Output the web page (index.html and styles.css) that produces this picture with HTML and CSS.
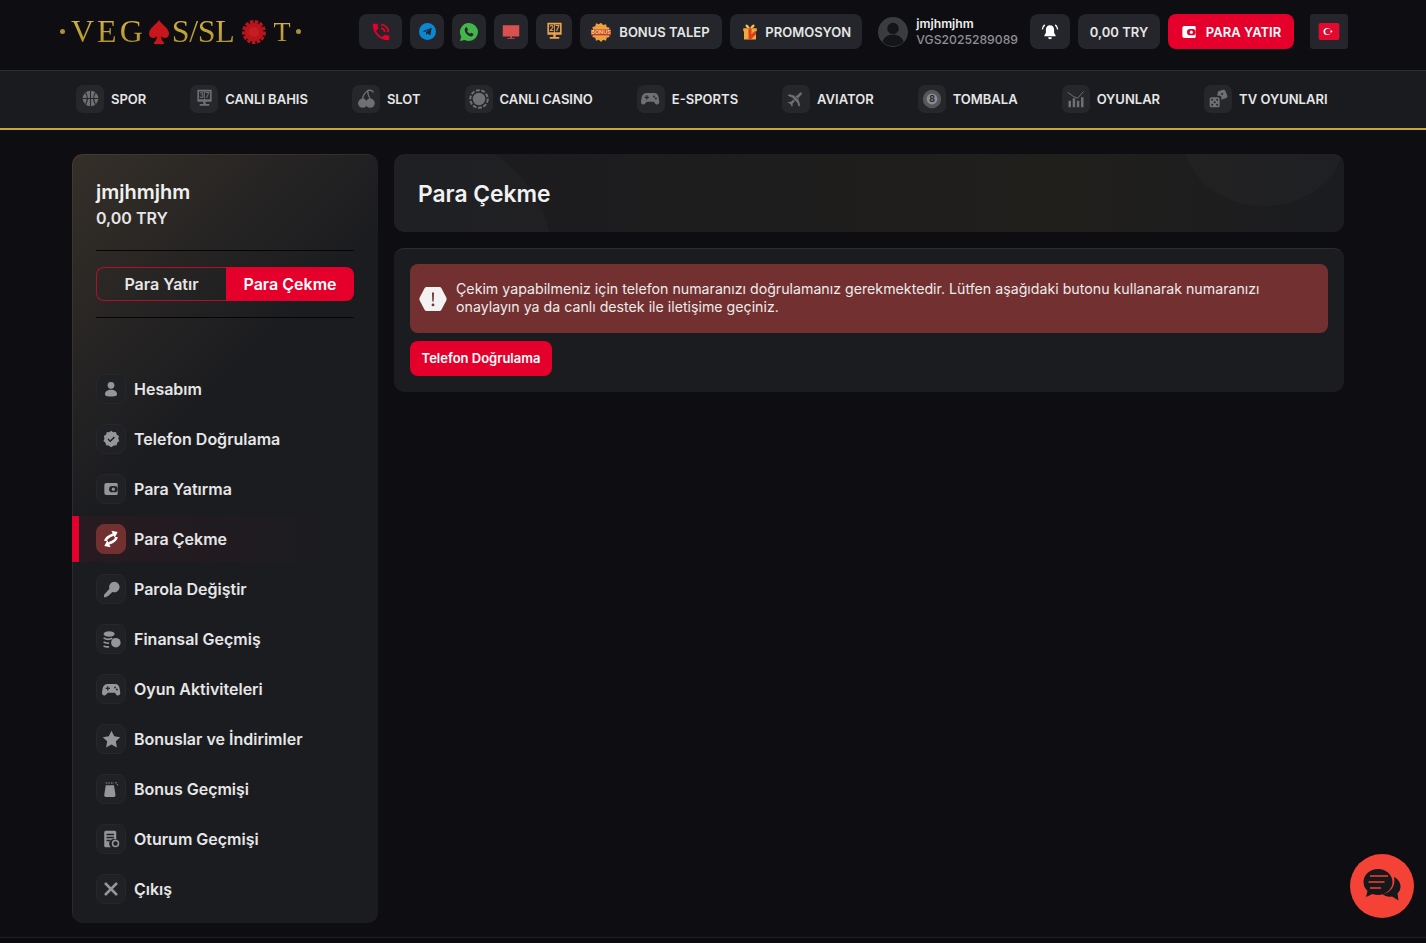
FILE: index.html
```html
<!DOCTYPE html>
<html lang="tr">
<head>
    <meta charset="UTF-8">
    <meta name="viewport" content="width=device-width, initial-scale=1.0">
    <title>Para Çekme</title>
    <link rel="stylesheet" href="styles.css">
</head>
<body>
    <svg class="sprite" width="0" height="0">
        <symbol id="i-pad" viewBox="0 0 24 24"><path fill="currentColor" d="M7 5h10c3 0 4.500 2 5.200 5.500l.8 5c.4 2.500-1 4-2.800 4-1.300 0-2.200-.8-3-1.900L16.500 16h-9l-1.700 1.600c-.8 1.100-1.700 1.900-3 1.900C1 19.500-.4 18 0 15.500l.8-5C1.500 7 4 5 7 5z"/><path fill="#25272b" d="M6.500 8h1.600v1.900H10v1.600H8.100v1.900H6.500v-1.900H4.600V9.900h1.900zM16.500 8.200a1.200 1.200 0 1 1 0 2.400 1.200 1.200 0 0 1 0-2.400zM18.800 10.800a1.200 1.200 0 1 1 0 2.400 1.200 1.200 0 0 1 0-2.400z"/></symbol>
        <symbol id="i-wallet" viewBox="0 0 24 24"><path fill="currentColor" d="M5 3h15a2 2 0 0 1 2 2v14a2 2 0 0 1-2 2H5a3 3 0 0 1-3-3V6a3 3 0 0 1 3-3z"/><rect x="9" y="7.500" width="13" height="9.500" rx="4.700" fill="var(--hole, #222428)"/><circle cx="15.500" cy="12.200" r="2.300" fill="currentColor"/></symbol>
    </svg>

    <header class="topbar">
        <a class="logo" href="#">
            <span class="logo-dot"></span>
            <span class="logo-text logo-veg">VEG</span>
            <svg class="logo-spade" viewBox="0 0 20 24"><path fill="#c8161d" d="M10 0c2 4 10 8 10 13.500 0 3-2 4.500-4.200 4.500-1.600 0-3-.8-3.800-2 .2 3 1 5 3 6.500v1.500H5v-1.500c2-1.500 2.800-3.500 3-6.500-.8 1.200-2.200 2-3.800 2C2 18 0 16.500 0 13.500 0 8 8 4 10 0z"/></svg>
            <span class="logo-text logo-ssl">S/SL</span>
            <svg class="logo-chip" viewBox="0 0 24 24"><circle cx="12" cy="12" r="9.500" fill="#b8141c"/><circle cx="12" cy="12" r="10.500" fill="none" stroke="#b8141c" stroke-width="3" stroke-dasharray="3.500 1.500"/><circle cx="12" cy="12" r="5" fill="#c81c24"/></svg>
            <span class="logo-text logo-t">T</span>
            <span class="logo-dot"></span>
        </a>

        <div class="top-actions">
            <a class="top-btn icon-wide" href="#"><svg viewBox="0 0 24 24" width="22" height="22"><path fill="#e4002b" d="M20 15.500c-1.250 0-2.450-.2-3.570-.57-.35-.11-.74-.03-1.020.24l-2.200 2.200c-2.830-1.440-5.150-3.750-6.590-6.590l2.200-2.210c.28-.26.360-.65.250-1C8.700 6.450 8.500 5.250 8.500 4c0-.55-.45-1-1-1H4c-.55 0-1 .45-1 1 0 9.390 7.610 17 17 17 .55 0 1-.45 1-1v-3.500c0-.55-.45-1-1-1zM19 12h2c0-4.970-4.030-9-9-9v2c3.870 0 7 3.130 7 7zm-4 0h2c0-2.760-2.240-5-5-5v2c1.660 0 3 1.340 3 3z"/></svg></a>
            <a class="top-btn icon-only" href="#"><svg viewBox="0 0 24 24" width="17" height="17"><circle cx="12" cy="12" r="12" fill="#0b88d4"/><path fill="#24262b" d="M5 11.800 18 6.600l-2.100 11-3.700-2.700-2 1.900-.4-3.500 5.600-5-7 4.300z"/></svg></a>
            <a class="top-btn icon-only" href="#"><svg viewBox="0 0 24 24" width="18" height="18"><path fill="#43b54a" d="M12 0a12 12 0 0 1 0 24c-2 0-4-.5-5.700-1.500L0 24l1.600-6A12 12 0 0 1 12 0z"/><path fill="#24262b" d="M8.500 5.800c.5 0 .8.100 1 .6l1 2.200c.1.400 0 .7-.2 1l-.8 1c.9 1.700 2.200 2.900 3.900 3.800l1-1c.3-.3.600-.3 1-.2l2.100 1c.4.200.6.500.5.900-.2 1.800-1.600 2.900-3.300 2.800-4.100-.4-8.100-4.300-8.400-8.500-.1-1.700.9-3.400 2.200-3.600z"/></svg></a>
            <a class="top-btn icon-only" href="#"><svg viewBox="0 0 24 24" width="18" height="18"><path fill="#d9514f" d="M1 3h22v15H1zM11 18h2v2h4v1H7v-1h4z"/></svg></a>
            <a class="top-btn icon-wide slim" href="#"><svg viewBox="0 0 24 24" width="19" height="19"><path fill="#eda34c" d="M3 1h18v15H3zM10.500 16h3v3H18v2H6v-2h4.500z"/><path fill="#24262b" d="M5 3h6.500v10H5zM12.500 3H19v10h-6.500z"/><text class="slot-num" x="8.200" y="11">2</text><text class="slot-num" x="15.700" y="11">7</text></svg></a>
            <a class="top-btn text-btn bonus-btn" href="#"><svg viewBox="0 0 24 24" width="20" height="20"><path fill="#e9a23f" d="M12 1l2.600 2.600 3.400-1 .9 3.500 3.500.9-1 3.400L24 12l-2.600 2.600 1 3.400-3.500.9-.9 3.500-3.400-1L12 24l-2.600-2.600-3.400 1-.9-3.500-3.500-.9 1-3.400L0 12l2.600-2.600-1-3.400 3.500-.9.900-3.500 3.400 1z"/><path fill="#c43a30" d="M0 9h24v7H0z"/><text class="bonus-tiny" x="12" y="14.500">BONUS</text></svg>BONUS TALEP</a>
            <a class="top-btn text-btn promo-btn" href="#"><svg viewBox="0 0 24 24" width="18" height="20"><path fill="#f0a93b" d="M3 7h18v4H3zM4 11h16v11H4z"/><path fill="#e03c20" d="M10 7h4v15h-4zM12 17l6-6h2v4l-7 7h-1z"/><path fill="#f5c04a" d="M12 7C9 7 6 6 6 3.500 6 1.500 9 1 12 7zM12 7c3 0 6-1 6-3.500C18 1.500 15 1 12 7z"/></svg>PROMOSYON</a>
            <a class="user" href="#">
                <svg viewBox="0 0 34 34" width="30" height="32"><circle cx="17" cy="17" r="17" fill="#3b3c40"/><circle cx="17" cy="13" r="6.500" fill="#141518"/><path fill="#141518" d="M5 28c2-6 7-8 12-8s10 2 12 8a17 17 0 0 1-24 0z"/></svg>
                <span class="user-text">
                    <b>jmjhmjhm</b>
                    <small>VGS2025289089</small>
                </span>
            </a>
            <a class="top-btn bell" href="#"><svg viewBox="0 0 24 24" width="18" height="18"><path fill="#fff" d="M12 3c3.500 0 5.500 2.500 5.500 6v4l2 3.500v1h-15v-1l2-3.500V9c0-3.500 2-6 5.500-6zM9.500 19h5a2.500 2.500 0 0 1-5 0z"/><path fill="none" stroke="#fff" stroke-width="1.800" d="M5 2.500C3 4 2 6 1.800 8.500M19 2.500c2 1.500 3 3.500 3.200 6"/></svg></a>
            <span class="top-btn balance">0,00 TRY</span>
            <a class="top-btn deposit" href="#"><svg class="deposit-ico" width="16" height="16"><use href="#i-wallet"/></svg>PARA YATIR</a>
            <a class="top-btn lang" href="#"><svg viewBox="0 0 22 18" width="22" height="17"><rect width="22" height="18" rx="2" fill="#e30a2f"/><circle cx="9" cy="9" r="3.800" fill="#fff"/><circle cx="10" cy="9" r="3" fill="#e30a2f"/><circle cx="13.500" cy="9" r="1" fill="#fff"/></svg></a>
        </div>
    </header>

    <nav class="mainnav">
        <a href="#"><span class="nav-ico"><svg viewBox="0 0 24 24" width="17" height="17"><circle cx="12" cy="12" r="11" fill="currentColor"/><path fill="none" stroke="#25272b" stroke-width="1.500" d="M12 1v22M1 12h22M5 3.500c3 5 3 12 0 17M19 3.500c-3 5-3 12 0 17"/></svg></span>SPOR</a>
        <a href="#"><span class="nav-ico"><svg viewBox="0 0 24 24" width="19" height="19"><path fill="currentColor" d="M3 1h18v15H3zM10.500 16h3v3H18v2H6v-2h4.500z"/><path fill="#25272b" d="M5 3h6.500v10H5zM12.500 3H19v10h-6.500z"/><text class="slot-num grey" x="8.200" y="11">3</text><text class="slot-num grey" x="15.700" y="11">7</text></svg></span>CANLI BAHIS</a>
        <a href="#"><span class="nav-ico"><svg viewBox="0 0 24 24" width="20" height="20"><circle cx="8" cy="17" r="5.500" fill="currentColor"/><circle cx="17" cy="17" r="5.500" fill="currentColor"/><path fill="none" stroke="currentColor" stroke-width="1.600" d="M8 12c0-4 2-7 6-10 0 4 1 7 3 10M14 2c3-1 6 0 7 2"/></svg></span>SLOT</a>
        <a href="#"><span class="nav-ico"><svg viewBox="0 0 24 24" width="20" height="20"><circle cx="12" cy="12" r="7.500" fill="currentColor"/><circle cx="12" cy="12" r="10.500" fill="none" stroke="currentColor" stroke-width="2.400" stroke-dasharray="4.500 2"/></svg></span>CANLI CASINO</a>
        <a href="#"><span class="nav-ico"><svg width="19" height="19"><use href="#i-pad"/></svg></span>E-SPORTS</a>
        <a href="#"><span class="nav-ico"><svg viewBox="0 0 24 24" width="20" height="20"><path fill="currentColor" transform="rotate(45 12 12)" d="M21 16v-2l-8-5V3.500c0-.83-.67-1.500-1.500-1.500S10 2.670 10 3.500V9l-8 5v2l8-2.500V19l-2 1.500V22l3.500-1 3.500 1v-1.500L13 19v-5.500l8 2.500z"/><path fill="none" stroke="#25272b" stroke-width="1" d="M6 10l8 8M9 7l8 8"/></svg></span>AVIATOR</a>
        <a href="#"><span class="nav-ico"><svg viewBox="0 0 24 24" width="20" height="20"><circle cx="12" cy="12" r="11" fill="#55575b"/><circle cx="12" cy="12" r="6.500" fill="#8b8c90"/><text class="ball-num" x="12" y="15.800">8</text></svg></span>TOMBALA</a>
        <a href="#"><span class="nav-ico"><svg viewBox="0 0 24 24" width="20" height="20"><path fill="currentColor" d="M3 14h3v8H3zM8 11h3v11H8zM13 14h3v8h-3zM18 10h3v12h-3z"/><path fill="none" stroke="currentColor" stroke-width="1.200" d="M2 4l7 5 5 2 7-8"/></svg></span>OYUNLAR</a>
        <a href="#"><span class="nav-ico"><svg viewBox="0 0 24 24" width="20" height="20"><rect x="2" y="10" width="12" height="12" rx="2" fill="currentColor"/><path fill="currentColor" d="M12 3l6-2c1.500-.4 2.300 0 2.800 1.200l2.400 6c.3 1.300 0 2-1.200 2.600L16 13v-3a2 2 0 0 0-2-2h-3z"/><g fill="#25272b"><circle cx="5" cy="13" r="1.200"/><circle cx="11" cy="13" r="1.200"/><circle cx="8" cy="16" r="1.200"/><circle cx="5" cy="19" r="1.200"/><circle cx="11" cy="19" r="1.200"/><circle cx="17" cy="6" r="1.200"/></g></svg></span>TV OYUNLARI</a>
    </nav>

    <div class="page">
        <aside class="sidebar">
            <div class="side-user">
                <h3>jmjhmjhm</h3>
                <p>0,00 TRY</p>
            </div>
            <div class="side-tabs">
                <a href="#">Para Yatır</a>
                <a href="#" class="active">Para Çekme</a>
            </div>
            <ul class="side-menu">
                <li><a href="#"><span class="menu-ico"><svg viewBox="0 0 24 24" width="18" height="18"><circle cx="12" cy="7" r="4.500" fill="currentColor"/><path fill="currentColor" d="M4 19c0-4 3.500-6 8-6s8 2 8 6c0 2-2 3-8 3s-8-1-8-3z"/></svg></span>Hesabım</a></li>
                <li><a href="#"><span class="menu-ico"><svg viewBox="0 0 24 24" width="18" height="18"><path fill="currentColor" d="M12 1l3 2 3.500-.2 1 3.300L22.500 8l-.8 3.500 1.300 3.200-2.700 2.200-.8 3.400-3.500.2L12 23l-3-2.500-3.500-.2-.8-3.400L2 14.700l1.300-3.200L2.500 8l3-1.900 1-3.300L10 3z"/><path fill="none" stroke="#1f2125" stroke-width="2" d="M8 12l3 3 5.500-5.500"/></svg></span>Telefon Doğrulama</a></li>
                <li><a href="#"><span class="menu-ico"><svg width="16" height="16"><use href="#i-wallet"/></svg></span>Para Yatırma</a></li>
                <li class="active"><a href="#"><span class="menu-ico"><svg viewBox="0 0 24 24" width="20" height="20"><g id="swap-half"><path fill="none" stroke="#fff" stroke-width="3.200" d="M5.500 14.500C5.500 10.500 9.500 8.500 15 6.500"/><path fill="#fff" d="M12.500 2l7.500 1.500-3.500 7z"/></g><use href="#swap-half" transform="rotate(180 12 12)"/></svg></span>Para Çekme</a></li>
                <li><a href="#"><span class="menu-ico"><svg viewBox="0 0 24 24" width="17" height="17"><path fill="currentColor" d="M16 1a7.500 7.500 0 1 1-2.800 14.500L7 21.500H5V23H1.500v-3.500L9 10.800A7.500 7.500 0 0 1 16 1z"/></svg></span>Parola Değiştir</a></li>
                <li><a href="#"><span class="menu-ico"><svg viewBox="0 0 24 24" width="19" height="19"><ellipse cx="9" cy="5" rx="7" ry="3.500" fill="currentColor"/><path fill="none" stroke="currentColor" stroke-width="2" d="M2 10c3 2 8 2 11 .5M2 15c2 1.500 5 1.800 7 1.500M2 20c2 1.300 5 1.500 7 1.200"/><circle cx="17.500" cy="16" r="6" fill="currentColor"/></svg></span>Finansal Geçmiş</a></li>
                <li><a href="#"><span class="menu-ico"><svg width="19" height="19"><use href="#i-pad"/></svg></span>Oyun Aktiviteleri</a></li>
                <li><a href="#"><span class="menu-ico"><svg viewBox="0 0 24 24" width="19" height="19"><path fill="currentColor" d="M12 1l3.400 7 7.600 1-5.500 5.300L18.800 22 12 18.300 5.200 22l1.300-7.700L1 9l7.600-1z"/></svg></span>Bonuslar ve İndirimler</a></li>
                <li><a href="#"><span class="menu-ico"><svg viewBox="0 0 24 24" width="18" height="18"><path fill="currentColor" d="M5 7h11l2 13c0 1.500-.8 2.500-2 2.500H5c-1.500 0-2-1-2-2.500z"/><path fill="none" stroke="currentColor" stroke-width="1.500" stroke-dasharray="2 1.500" d="M5 4h11M18 3l3 4"/></svg></span>Bonus Geçmişi</a></li>
                <li><a href="#"><span class="menu-ico"><svg viewBox="0 0 24 24" width="18" height="18"><path fill="currentColor" d="M5 1h12a2 2 0 0 1 2 2v10a6 6 0 0 0-7 10H5a2 2 0 0 1-2-2V3a2 2 0 0 1 2-2z"/><path fill="none" stroke="#1f2125" stroke-width="1.800" d="M6 6h10M6 10h10M6 14h5"/><circle cx="18" cy="18" r="4" fill="none" stroke="currentColor" stroke-width="2"/></svg></span>Oturum Geçmişi</a></li>
                <li><a href="#"><span class="menu-ico"><svg viewBox="0 0 24 24" width="18" height="18"><path fill="none" stroke="currentColor" stroke-width="3.400" d="M4 4l16 16M20 4L4 20"/></svg></span>Çıkış</a></li>
            </ul>
        </aside>

        <main class="content">
            <div class="content-head">
                <h1>Para Çekme</h1>
            </div>
            <div class="panel">
                <div class="alert">
                    <svg class="alert-ico" viewBox="0 0 28 26" width="28" height="26"><path fill="#f2f2f2" d="M7.500 1h13c.8 0 1.400.4 1.800 1l5 9.500c.4.800.4 2.200 0 3l-5 9.500c-.4.600-1 1-1.800 1h-13c-.8 0-1.400-.4-1.800-1l-5-9.500c-.4-.8-.4-2.200 0-3l5-9.500c.4-.6 1-1 1.800-1z"/><path fill="#733030" d="M13 6.500h2l-.3 9h-1.400zM14 17.500a1.400 1.400 0 1 1 0 2.800 1.400 1.400 0 0 1 0-2.800z"/></svg>
                    <p>Çekim yapabilmeniz için telefon numaranızı doğrulamanız gerekmektedir. Lütfen aşağıdaki butonu kullanarak numaranızı onaylayın ya da canlı destek ile iletişime geçiniz.</p>
                </div>
                <a class="verify-btn" href="#">Telefon Doğrulama</a>
            </div>
        </main>
    </div>

    <footer class="footer"></footer>

    <a class="chat" href="#"><svg viewBox="0 0 40 36" width="40" height="36"><path fill="#17181b" d="M16 1c8 0 14.500 5.700 14.500 13S24 27 16 27c-2 0-3.800-.3-5.500-1L4 29l1.500-6C3 20.500 1.500 17.500 1.500 14 1.500 6.700 8 1 16 1z"/><path fill="#17181b" d="M32 9c4 2 6.500 5.500 6.500 9.500 0 2.800-1.200 5.300-3 7l1 7-6.500-4c-3.500.7-7-.2-9.500-2.500C28 25.500 34 18 32 9z"/><path fill="none" stroke="#f44336" stroke-width="1.600" d="M8 8h18M6.500 14h16M8 20h11"/></svg></a>
</body>
</html>
```

FILE: styles.css
```css
* {
    box-sizing: border-box;
}

html, body {
    height: 943px;
    overflow: hidden;
}

body {
    margin: 0;
    font-family: 'Inter', 'Noto Sans', sans-serif;
    background-color: #0d0d12;
    color: #ececec;
}

a {
    color: inherit;
    text-decoration: none;
}

.sprite {
    position: absolute;
}

/* top bar */
.topbar {
    height: 71px;
    padding: 14px 78px 0 60px;
    display: flex;
    justify-content: space-between;
    align-items: flex-start;
    border-bottom: 1px solid #2c2d31;
}

.logo {
    width: 242px;
    height: 35px;
    display: flex;
    align-items: center;
    font-family: 'Liberation Serif', serif;
    font-size: 32px;
    line-height: 35px;
}

.logo-text {
    background: linear-gradient(180deg, #dcbc45, #a98a2c);
    -webkit-background-clip: text;
    background-clip: text;
    color: transparent;
}

.logo-dot {
    width: 5px;
    height: 5px;
    border-radius: 50%;
    background-color: #a98f3e;
    flex: none;
}

.logo-veg {
    margin-left: 6px;
    letter-spacing: 3px;
}

.logo-spade {
    width: 20px;
    height: 24px;
    margin-left: 3px;
    flex: none;
}

.logo-ssl {
    margin-left: 3px;
    letter-spacing: -0.3px;
}

.logo-chip {
    width: 24px;
    height: 24px;
    margin-left: 7px;
    flex: none;
}

.logo-t {
    margin-left: 8px;
    font-size: 28px;
}

.logo-t + .logo-dot {
    margin-left: 5px;
}

.top-actions {
    display: flex;
    align-items: center;
    gap: 8px;
}

.top-btn {
    height: 35px;
    display: flex;
    align-items: center;
    justify-content: center;
    background-color: #24262b;
    border-radius: 8px;
    font-size: 13px;
    font-weight: 600;
    color: #e6e6e6;
}

.icon-wide {
    width: 43px;
}

.icon-wide.slim {
    width: 36px;
}

.icon-only {
    width: 34px;
}

.text-btn {
    justify-content: flex-start;
    padding-left: 11px;
}

.bonus-btn {
    width: 142px;
    gap: 8px;
}

.promo-btn {
    width: 132px;
    gap: 6px;
}

.slot-num {
    font-size: 9px;
    font-weight: 700;
    text-anchor: middle;
    fill: #eda34c;
}

.slot-num.grey {
    fill: #6e7074;
}

.bonus-tiny {
    font-size: 6.500px;
    font-weight: 700;
    text-anchor: middle;
    fill: #f5d27a;
}

.ball-num {
    font-size: 10.500px;
    font-weight: 700;
    text-anchor: middle;
    fill: #25272b;
}

.user {
    margin-left: 8px;
    display: flex;
    align-items: center;
    gap: 8px;
}

.user-text {
    display: flex;
    flex-direction: column;
    line-height: 16px;
}

.user-text b {
    font-size: 12.2px;
    font-weight: 600;
    color: #f0f0f0;
}

.user-text small {
    font-size: 12.2px;
    font-weight: 500;
    color: #8f9093;
}

.bell {
    width: 40px;
    margin-left: 4px;
}

.balance {
    width: 82px;
}

.deposit {
    width: 126px;
    gap: 9px;
    background-color: #e4002b;
    color: #fff;
}

.deposit-ico {
    --hole: #e4002b;
}

.lang {
    width: 38px;
    margin-left: 8px;
    border-radius: 3px;
}

/* main nav */
.mainnav {
    height: 59px;
    padding: 0 0 2px 76px;
    display: flex;
    align-items: center;
    gap: 44px;
    background-color: #1a1b1f;
    border-bottom: 2px solid #c9a63a;
}

.mainnav a {
    display: flex;
    align-items: center;
    gap: 7px;
    font-size: 13px;
    font-weight: 600;
    color: #e6e6e6;
}

.nav-ico {
    width: 28px;
    height: 28px;
    display: flex;
    align-items: center;
    justify-content: center;
    background-color: #25272b;
    border-radius: 7px;
    color: #6e7074;
}

/* page */
.page {
    padding: 24px 82px 0 72px;
    display: flex;
    align-items: flex-start;
    gap: 16px;
}

.sidebar {
    width: 306px;
    height: 769px;
    flex: none;
    padding: 24px 24px 0;
    border-radius: 10px;
    background:
        linear-gradient(135deg, rgba(120, 96, 60, 0.28) 0%, rgba(120, 96, 60, 0) 36%),
        #1b1c20;
    box-shadow: inset 1px 1px 0 rgba(150, 125, 85, 0.15);
}

.side-user {
    height: 73px;
    border-bottom: 1px solid #050506;
}

.side-user h3 {
    margin: 0;
    font-size: 20px;
    line-height: 28px;
    font-weight: 600;
    color: #f0f0f0;
}

.side-user p {
    margin: 0;
    font-size: 16px;
    line-height: 24px;
    font-weight: 600;
    color: #e6e6e6;
}

.side-tabs {
    height: 51px;
    margin-top: 16px;
    display: flex;
    border-bottom: 1px solid #050506;
    padding-bottom: 16px;
}

.side-tabs a {
    width: 130px;
    display: flex;
    align-items: center;
    justify-content: center;
    font-size: 16px;
    font-weight: 600;
    color: #e6e6e6;
    border: 1px solid #b01030;
    border-right: none;
    border-radius: 8px 0 0 8px;
}

.side-tabs a.active {
    width: 128px;
    background-color: #e4002b;
    border: none;
    border-radius: 0 8px 8px 0;
    color: #fff;
}

.side-menu {
    list-style-type: none;
    margin: 48px 0 0;
    padding: 0;
    display: flex;
    flex-direction: column;
    gap: 4px;
}

.side-menu li {
    margin: 0 -24px;
    padding: 0 24px;
}

.side-menu a {
    height: 46px;
    display: flex;
    align-items: center;
    gap: 8px;
    font-size: 16px;
    font-weight: 600;
    color: #e6e6e6;
}

.menu-ico {
    width: 30px;
    height: 30px;
    display: flex;
    align-items: center;
    justify-content: center;
    background-color: #1f2125;
    border: 1px solid #25272b;
    border-radius: 8px;
    color: #95969a;
}

.side-menu li.active {
    padding-left: 17px;
    border-left: 7px solid #e4002b;
    background: linear-gradient(90deg, rgba(228, 0, 43, 0.06), rgba(228, 0, 43, 0) 85%);
}

.side-menu li.active .menu-ico {
    background-color: #733030;
    border-color: #733030;
}

/* content */
.content {
    flex: 1;
    display: flex;
    flex-direction: column;
    gap: 16px;
}

.content-head {
    position: relative;
    overflow: hidden;
    height: 78px;
    padding-left: 24px;
    display: flex;
    align-items: center;
    border-radius: 10px;
    background: linear-gradient(90deg, #1b1c20 0%, #1e1d1d 40%, #201f1c 70%, #1b1c20 100%);
}

.content-head::before {
    content: "";
    position: absolute;
    left: -97px;
    top: -20px;
    width: 256px;
    height: 256px;
    border-radius: 50%;
    background-color: rgba(255, 255, 255, 0.02);
}

.content-head::after {
    content: "";
    position: absolute;
    right: 0;
    top: -82px;
    width: 160px;
    height: 134px;
    border-radius: 50%;
    background-color: rgba(255, 255, 255, 0.02);
}

.content-head h1 {
    position: relative;
    margin: 0;
    font-size: 22.8px;
    font-weight: 600;
    color: #f2f2f2;
}

.panel {
    height: 144px;
    padding: 15px 16px 16px;
    border-radius: 10px;
    border-top: 1px solid #2c2d31;
    background-color: #1b1c20;
}

.alert {
    height: 69px;
    padding: 0 16px 2px 9px;
    display: flex;
    align-items: center;
    gap: 9px;
    border-radius: 8px;
    background-color: #733030;
}

.alert-ico {
    flex: none;
    margin-top: 2px;
}

.alert p {
    margin: 0;
    font-size: 14.2px;
    line-height: 18px;
    color: #ececec;
}

.verify-btn {
    width: 142px;
    height: 35px;
    margin-top: 8px;
    padding-bottom: 2px;
    display: flex;
    align-items: center;
    justify-content: center;
    background-color: #e4002b;
    border-radius: 8px;
    font-size: 13px;
    font-weight: 600;
    color: #fff;
}

.footer {
    height: 6px;
    margin-top: 14px;
    border-top: 1px solid #1f2023;
    background-color: #0b0b0e;
}

/* live chat button */
.chat {
    position: fixed;
    left: 1350px;
    top: 854px;
    width: 64px;
    height: 64px;
    display: flex;
    align-items: center;
    justify-content: center;
    border-radius: 50%;
    background-color: #f44336;
}
```
